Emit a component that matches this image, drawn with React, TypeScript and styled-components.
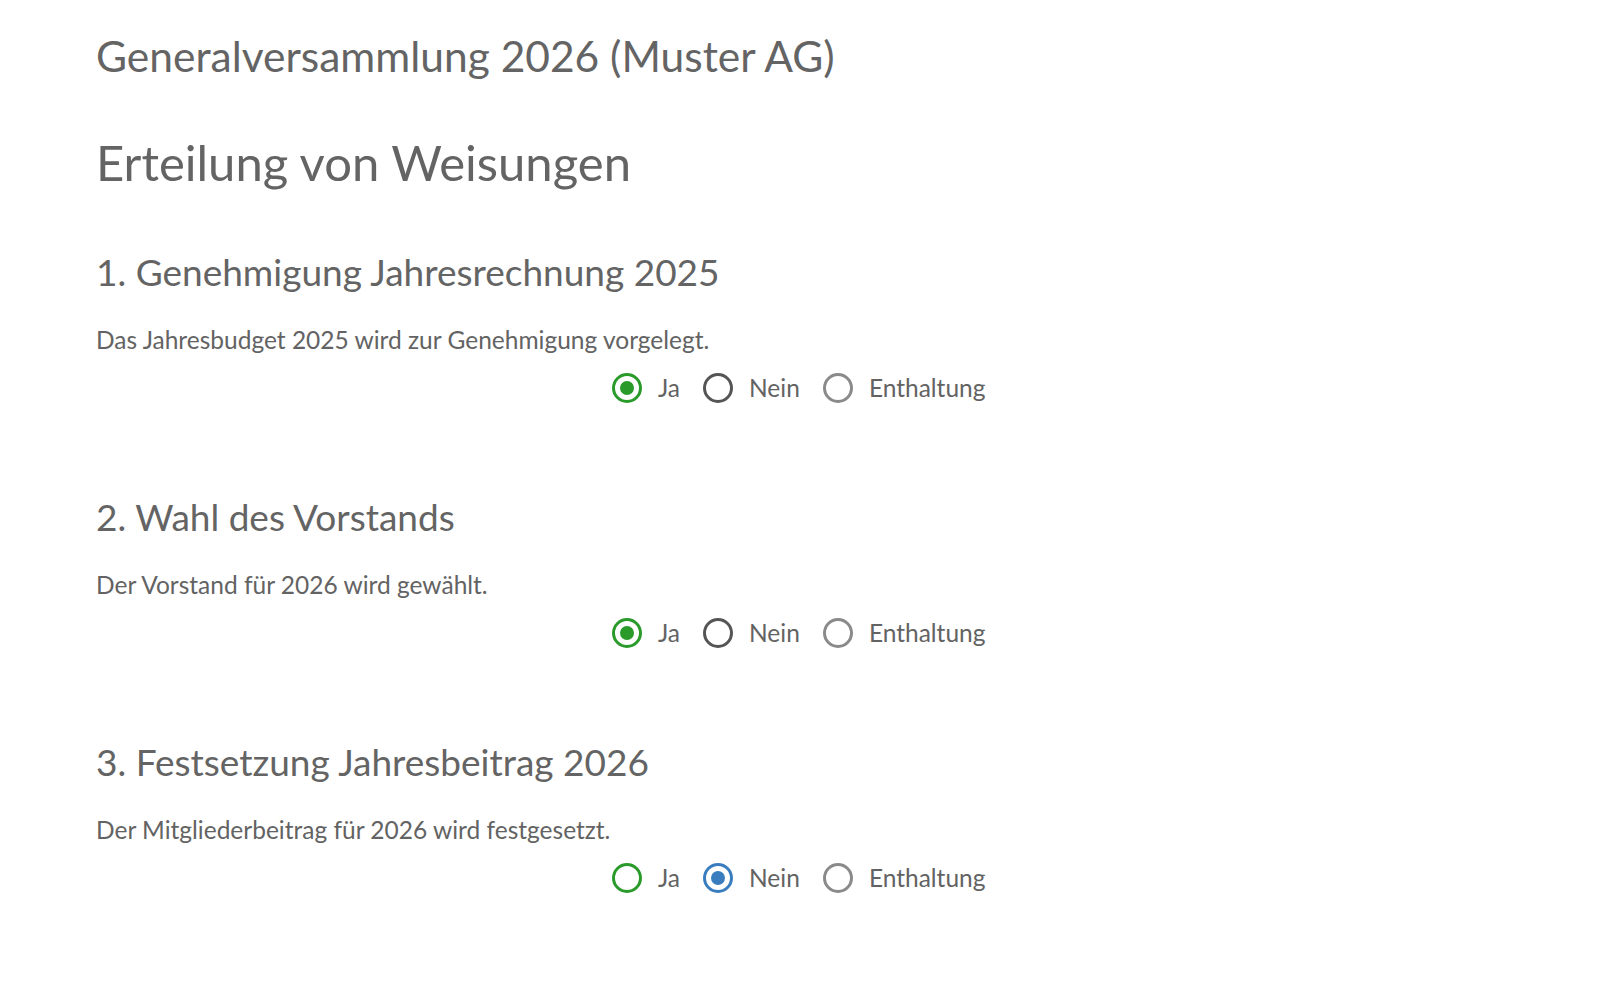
import React, { useState } from 'react';
import styled, { createGlobalStyle } from 'styled-components';

const GlobalStyle = createGlobalStyle`
  html, body {
    margin: 0;
    padding: 0;
    background: #ffffff;
  }
  body {
    font-family: Lato, "Open Sans", "Noto Sans", sans-serif;
    color: #636363;
  }
`;

type Choice = 'ja' | 'nein' | 'enthaltung';

const items = [
  {
    id: 1,
    title: '1. Genehmigung Jahresrechnung 2025',
    text: 'Das Jahresbudget 2025 wird zur Genehmigung vorgelegt.',
    initial: 'ja' as Choice,
  },
  {
    id: 2,
    title: '2. Wahl des Vorstands',
    text: 'Der Vorstand für 2026 wird gewählt.',
    initial: 'ja' as Choice,
  },
  {
    id: 3,
    title: '3. Festsetzung Jahresbeitrag 2026',
    text: 'Der Mitgliederbeitrag für 2026 wird festgesetzt.',
    initial: 'nein' as Choice,
  },
];

const options: { value: Choice; label: string; color: string }[] = [
  { value: 'ja', label: 'Ja', color: '#2a9a2a' },
  { value: 'nein', label: 'Nein', color: '#3a7dbf' },
  { value: 'enthaltung', label: 'Enthaltung', color: '#888888' },
];

// border colour of an unchecked radio
const idleBorder: Record<Choice, string> = {
  ja: '#2a9a2a',
  nein: '#555555',
  enthaltung: '#8a8a8a',
};

const VoteItem = ({ item }: { item: (typeof items)[number] }) => {
  const [value, setValue] = useState<Choice>(item.initial);

  return (
    <Section>
      <ItemTitle>{item.title}</ItemTitle>
      <ItemText>{item.text}</ItemText>
      <RadioRow>
        {options.map((opt) => {
          const checked = value === opt.value;
          return (
            <RadioLabel key={opt.value}>
              <HiddenInput
                type="radio"
                name={`item-${item.id}`}
                checked={checked}
                onChange={() => setValue(opt.value)}
              />
              <RadioCircle
                $border={checked ? opt.color : idleBorder[opt.value]}
                $dot={checked ? opt.color : 'transparent'}
              />
              <RadioText>{opt.label}</RadioText>
            </RadioLabel>
          );
        })}
      </RadioRow>
    </Section>
  );
};

const App = () => {
  return (
    <>
      <GlobalStyle />
      <Page>
        <MeetingTitle>Generalversammlung 2026 (Muster AG)</MeetingTitle>
        <PageTitle>Erteilung von Weisungen</PageTitle>
        {items.map((item) => (
          <VoteItem key={item.id} item={item} />
        ))}
      </Page>
    </>
  );
};

const Page = styled.main`
  padding: 32px 96px 60px;
  display: flex;
  flex-direction: column;
`;

const MeetingTitle = styled.h1`
  margin: 0;
  font-size: 42.5px;
  line-height: 48px;
  font-weight: 400;
  color: #646464;
`;

const PageTitle = styled.h2`
  margin: 53px 0 0;
  font-size: 49px;
  line-height: 58px;
  font-weight: 400;
  color: #646464;
`;

const Section = styled.section`
  margin-top: 59px;
  display: flex;
  flex-direction: column;

  & + & {
    margin-top: 91px;
  }
`;

const ItemTitle = styled.h3`
  margin: 0;
  font-size: 37px;
  line-height: 44px;
  font-weight: 400;
  color: #646464;
`;

const ItemText = styled.p`
  margin: 31px 0 0;
  font-size: 24.5px;
  line-height: 30px;
  color: #636363;
`;

const RadioRow = styled.div`
  margin-top: 17px;
  padding-left: 516px;
  height: 32px;
  display: flex;
  align-items: center;
  gap: 23px;
`;

const RadioLabel = styled.label`
  display: flex;
  align-items: center;
  gap: 16px;
  cursor: pointer;
`;

const HiddenInput = styled.input`
  position: absolute;
  opacity: 0;
  width: 0;
  height: 0;
  margin: 0;
`;

const RadioCircle = styled.span<{ $border: string; $dot: string }>`
  box-sizing: border-box;
  width: 30px;
  height: 30px;
  border-radius: 50%;
  border: 3px solid ${(p) => p.$border};
  display: flex;
  align-items: center;
  justify-content: center;

  &::after {
    content: '';
    width: 14px;
    height: 14px;
    border-radius: 50%;
    background: ${(p) => p.$dot};
  }
`;

const RadioText = styled.span`
  font-size: 24.5px;
  line-height: 30px;
  color: #636363;
`;

export default App;
